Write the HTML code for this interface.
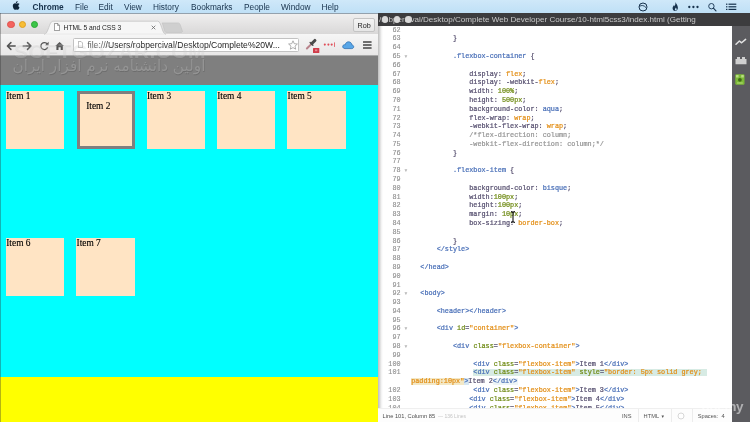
<!DOCTYPE html>
<html lang="en">
<head>
<meta charset="utf-8">
<title>HTML 5 and CSS 3</title>
<style>
html,body{margin:0;padding:0;}
body{width:750px;height:422px;overflow:hidden;position:relative;background:#c3e2f7;font-family:"Liberation Sans",sans-serif;}
div{box-sizing:border-box;}
#stage{position:absolute;left:0;top:0;width:750px;height:422px;overflow:hidden;}
#blur{position:absolute;left:-6px;top:-6px;width:762px;height:434px;filter:blur(0.5px);}
#inner{position:absolute;left:6px;top:6px;width:750px;height:422px;}
#inner>div{position:absolute;}
.bl{position:absolute;}

/* ---------- mac menu bar ---------- */
#menubar{left:0;top:0;width:750px;height:13px;background:linear-gradient(#cfe8f9,#bfe0f6);}
#menubar span{position:absolute;top:2.9px;font-size:8.3px;line-height:9px;color:#16304a;white-space:nowrap;}
#menubar span.b{font-weight:bold;}
#menubar svg{position:absolute;}

/* ---------- chrome window ---------- */
#chrome{left:0;top:13px;width:378px;height:409px;background:#f1f1f1;overflow:hidden;}
#tabstrip{position:absolute;left:0;top:0;width:378px;height:21px;background:linear-gradient(#efefef,#e4e3e3 50%,#d9d8d8);border-top:0.6px solid #93a1ad;}
#toolbar{position:absolute;left:0;top:21px;width:378px;height:21.7px;background:linear-gradient(#f6f6f6,#e8e7e7);border-bottom:0.6px solid #a9a9a9;}
.tl{position:absolute;width:7.2px;height:7.2px;border-radius:50%;top:7.9px;}
#tabtitle{position:absolute;left:63.6px;top:10.8px;font-size:6.7px;line-height:8px;color:#222;white-space:nowrap;}
#rob{position:absolute;left:353px;top:5.2px;width:22.2px;height:14px;border:0.6px solid #c4c4c4;border-radius:2px;background:linear-gradient(#f4f4f4,#e6e6e6);font-size:7.2px;line-height:13.2px;text-align:center;color:#222;}
#urlbar{position:absolute;left:73px;top:24.8px;width:226.4px;height:14px;background:#fff;border:0.6px solid #c2c2c2;border-radius:1.5px;}
#url{position:absolute;left:87.4px;top:27.8px;font-size:8.6px;line-height:9px;color:#1c1c1c;white-space:nowrap;}
#url i{font-style:normal;color:#5a5a5a;}

/* ---------- page ---------- */
#page{position:absolute;left:0;top:42.6px;width:378px;height:366.4px;background:#ffff00;overflow:hidden;font-family:"Liberation Serif",serif;}
#hdr{position:absolute;left:0;top:0;width:378px;height:29.2px;background:#7f7f7f;}
#wm{position:absolute;left:9px;top:-1.2px;width:200px;font-family:"DejaVu Sans","Liberation Sans",sans-serif;font-size:15.3px;line-height:24px;color:#949494;text-shadow:0.5px 0.6px 0.5px #6e6e6e;white-space:nowrap;direction:rtl;text-align:center;}
#flex{position:absolute;left:0;top:29.2px;width:378px;height:292.7px;background:#00ffff;}
.it{position:absolute;width:58.6px;height:58.6px;background:#ffe4c4;font-size:9.4px;line-height:11.8px;padding-left:0.4px;padding-top:0.2px;-webkit-text-stroke:0.12px;color:#000;white-space:nowrap;}
.it.b{border:3px solid #7f7f7f;padding:6.9px 5.8px 5.8px 6.5px;}
#wm2{position:absolute;left:14px;top:27.4px;font-size:21px;line-height:21px;font-weight:bold;letter-spacing:0.4px;color:rgba(255,255,255,0.2);white-space:nowrap;text-shadow:0 0.5px 0.5px rgba(90,90,90,0.1);}

/* ---------- editor ---------- */
#editor{left:378px;top:13px;width:372px;height:409px;background:#fff;overflow:hidden;}
#etitle{position:absolute;left:0;top:0;width:372px;height:13.3px;background:#3c3c3e;}
#etitle span{position:absolute;left:1px;top:2.2px;font-size:8.08px;line-height:9px;color:#c9c9c9;white-space:nowrap;}
.etl{position:absolute;top:3.4px;width:6.6px;height:6.6px;border-radius:50%;background:#d9d9d9;}
#eside{position:absolute;left:353.6px;top:13.3px;width:18.4px;height:396px;background:#5b5b5f;}
#eleft{position:absolute;left:0;top:13.3px;width:5px;height:396px;background:linear-gradient(90deg,#bdbdbd,#f3f3f3 70%,#fff);}
#codewrap{position:absolute;left:-378px;top:-13px;width:750px;height:422px;font-family:"Liberation Mono",monospace;font-size:6.8px;}
#codeclip{position:absolute;left:0;top:13.3px;width:353.6px;height:382.2px;overflow:hidden;}
#codeclip>#codewrap{top:-26.3px;}
.ln{position:absolute;left:380px;width:20.6px;text-align:right;height:9px;line-height:9px;color:#8f8f8f;-webkit-text-stroke:0.12px;}
.fold{position:absolute;left:404.6px;width:6px;height:9px;line-height:9px;color:#b9b9b9;font-size:5.6px;font-family:"DejaVu Sans",sans-serif;}
.cl{position:absolute;height:9px;line-height:9px;white-space:pre;color:#55516a;-webkit-text-stroke:0.22px;}
.hl{position:absolute;background:#d7ebe4;}
.h2{background:#f3e8c6;}
.h3{background:#d6e7f2;}
.h4{background:#eef5f6;}
.p,.x{color:#575070;}
.s,.t{color:#4a70b8;}
.v,.q{color:#e38f17;}
.n,.a{color:#6f8a14;}
.c{color:#969696;}
#status{position:absolute;left:0;top:395.3px;width:353.6px;height:13.7px;background:#fdfdfd;border-top:0.5px solid #efefef;font-size:5.7px;line-height:7px;color:#555;}
#status span{position:absolute;top:3.6px;white-space:nowrap;}
#status i{position:absolute;top:0;width:0.5px;height:13.7px;background:#ececec;}
#udemy{position:absolute;left:323.6px;top:383.9px;font-size:13.4px;line-height:20px;font-weight:bold;color:rgba(255,255,255,0.52);white-space:nowrap;letter-spacing:-0.3px;}
</style>
</head>
<body>
<div id="stage"><div id="blur"><div id="inner">
<!-- edge bleed strips so the soft-focus filter does not fade at the borders -->
<div class="bl" style="left:-6px;top:-6px;width:762px;height:19px;background:#c9e5f8"></div>
<div class="bl" style="left:-6px;top:13px;width:10px;height:21px;background:#e4e3e3"></div>
<div class="bl" style="left:-6px;top:34px;width:10px;height:21.600px;background:#efefef"></div>
<div class="bl" style="left:-6px;top:55.600px;width:10px;height:29.200px;background:#7f7f7f"></div>
<div class="bl" style="left:-6px;top:84.800px;width:10px;height:292.700px;background:#00ffff"></div>
<div class="bl" style="left:-6px;top:377.500px;width:390px;height:51px;background:#ffff00"></div>
<div class="bl" style="left:378px;top:400px;width:360px;height:28px;background:#fdfdfd"></div>
<div class="bl" style="left:731.600px;top:13px;width:25px;height:415px;background:#5b5b5f"></div>
<div class="bl" style="left:740px;top:13px;width:16px;height:13.300px;background:#3c3c3e"></div>

<!-- ======= macOS menu bar ======= -->
<div id="menubar">
  <svg style="left:12px;top:1.4px" width="8" height="9.6" viewBox="0 0 16 19"><path fill="#0f2438" d="M11.2 0c.1 1.1-.3 2.100-.9 2.900-.7.800-1.700 1.400-2.700 1.300-.1-1 .4-2.100 1-2.800C9.300.600 10.400.100 11.200 0zM14.500 6.400c-.1.100-1.800 1.100-1.800 3.200 0 2.500 2.200 3.300 2.200 3.400 0 .100-.3 1.200-1.100 2.300-.7 1-1.400 2-2.500 2-1.100 0-1.400-.6-2.700-.6-1.200 0-1.700.7-2.700.7-1 0-1.800-1-2.600-2.100C2.300 13.900 1.600 11.600 1.600 9.500c0-3.400 2.200-5.200 4.400-5.200 1.100 0 2.100.8 2.800.8.700 0 1.800-.8 3.100-.8.500 0 2.300.100 3.500 1.800l-.9.300z"/></svg>
  <span class="b" style="left:32.4px">Chrome</span>
  <span style="left:75px">File</span>
  <span style="left:98.5px">Edit</span>
  <span style="left:124px">View</span>
  <span style="left:153px">History</span>
  <span style="left:191px">Bookmarks</span>
  <span style="left:244px">People</span>
  <span style="left:281px">Window</span>
  <span style="left:321.5px">Help</span>
  <!-- right status icons -->
  <svg style="left:637.8px;top:1.7px" width="10" height="10" viewBox="0 0 10 10"><circle cx="5" cy="5" r="4" fill="none" stroke="#17324d" stroke-width="1"/><path d="M1.6 4.300C3.400 3 6 3.200 8 5.600" fill="none" stroke="#17324d" stroke-width="0.9"/></svg>
  <svg style="left:672.4px;top:2.2px" width="7" height="9.6" viewBox="0 0 7 9.6"><path fill="#17324d" d="M3.500 0C3.900 1.700 5.900 3.300 5.900 5.800 5.900 7.700 4.800 9 3.200 9 1.600 9 .6 7.800.6 6.300.6 4.900 1.500 4.100 2 3.100 2.400 3.600 2.500 4 2.500 4.400 3.200 3.400 3.600 1.700 3.500 0z"/><path fill="#c3e2f7" d="M3.900 5.600c.4.700.8 1.100.8 1.800 0 .6-.4 1-.9 1-.5 0-.9-.4-.9-.9 0-.7.700-1.100 1-1.900z"/></svg>
  <svg style="left:687px;top:4.6px" width="14" height="4" viewBox="0 0 14 4"><circle cx="2.300" cy="2" r="1.150" fill="#17324d"/><circle cx="6.400" cy="2" r="1.150" fill="#17324d"/><circle cx="10.500" cy="2" r="1.150" fill="#17324d"/></svg>
  <svg style="left:707px;top:1.6px" width="11" height="11" viewBox="0 0 11 11"><circle cx="4.400" cy="4.200" r="2.700" fill="none" stroke="#1d3a56" stroke-width="0.950"/><path d="M6.400 6.200L9 8.900" stroke="#1d3a56" stroke-width="1.150" stroke-linecap="round"/></svg>
  <svg style="left:725.6px;top:2.8px" width="12" height="8" viewBox="0 0 12 8"><g fill="#17324d"><rect x="0" y="0.600" width="1.400" height="1.200"/><rect x="2.500" y="0.600" width="7.800" height="1.200"/><rect x="0" y="3.200" width="1.400" height="1.200"/><rect x="2.500" y="3.200" width="7.800" height="1.200"/><rect x="0" y="5.800" width="1.400" height="1.200"/><rect x="2.500" y="5.800" width="7.800" height="1.200"/></g></svg>
</div>

<!-- ======= Chrome browser window ======= -->
<div id="chrome">
  <div id="tabstrip"></div>
  <div id="toolbar"></div>
  <!-- tab shape + new tab button -->
  <svg style="position:absolute;left:0;top:0" width="378" height="23" viewBox="0 0 378 23">
    <path d="M44.500 21.300C48.300 20.800 49.300 8.200 52.800 8.200L157.800 8.200C161.300 8.200 162 20.800 165.600 21.300Z" fill="#f6f6f6" stroke="#b7b7b7" stroke-width="0.600"/>
    <path d="M45 21.300L165.200 21.300" stroke="#f6f6f6" stroke-width="1"/>
    <path d="M162.200 9.900L177.800 9.900C179.400 9.900 180 10.900 180.400 12.300L182.300 17.800C182.600 18.900 182.200 19.400 181.100 19.400L166.600 19.400C165.500 19.400 165 18.800 164.600 17.600L162.200 9.900Z" fill="#cfcfcf" stroke="#bdbdbd" stroke-width="0.500"/>
  </svg>
  <div class="tl" style="left:7.4px;background:#f4635e;border:0.4px solid #e0514b"></div>
  <div class="tl" style="left:19.2px;background:#f8bd34;border:0.4px solid #dea024"></div>
  <div class="tl" style="left:30.9px;background:#3bc548;border:0.4px solid #2aa834"></div>
  <!-- page favicon in tab -->
  <svg style="position:absolute;left:54.400px;top:10.300px" width="6" height="8" viewBox="0 0 6 8"><path d="M0.400 0.400L3.700 0.400L5.600 2.400L5.600 7.600L0.400 7.600Z" fill="#fff" stroke="#6d6d6d" stroke-width="0.700"/><path d="M3.600 0.400L3.600 2.500L5.600 2.500" fill="none" stroke="#6d6d6d" stroke-width="0.600"/></svg>
  <div id="tabtitle">HTML 5 and CSS 3</div>
  <svg style="position:absolute;left:150.600px;top:12.200px" width="5" height="5" viewBox="0 0 5 5"><path d="M0.700 0.700L4.300 4.300M4.300 0.700L0.700 4.300" stroke="#666" stroke-width="0.800"/></svg>
  <div id="rob">Rob</div>

  <!-- toolbar buttons -->
  <svg style="position:absolute;left:5.500px;top:27.500px" width="62" height="10" viewBox="0 0 62 10">
    <g fill="none" stroke="#525252" stroke-width="1.500" stroke-linecap="round" stroke-linejoin="round">
      <path d="M9.200 5L1.600 5M4.900 1.600L1.400 5L4.900 8.400"/>
    </g>
    <g fill="none" stroke="#5f5f5f" stroke-width="1.500" stroke-linecap="round" stroke-linejoin="round">
      <path d="M17.200 5L24.800 5M21.500 1.600L25 5L21.500 8.400"/>
    </g>
    <path d="M41.300 3.100A3.500 3.500 0 1 0 41.700 6.200" fill="none" stroke="#555" stroke-width="1.300"/>
    <path d="M42.600 0.800L42.600 4.200L39.200 4.200Z" fill="#555"/>
    <path d="M49.200 5.100L53.600 1L58 5.100L56.800 5.100L56.800 9L54.700 9L54.700 6.200L52.500 6.200L52.500 9L50.400 9L50.400 5.100Z" fill="#555"/>
  </svg>
  <div id="urlbar"></div>
  <svg style="position:absolute;left:77.800px;top:28px" width="5" height="7" viewBox="0 0 5 7"><path d="M0.400 0.400L3 0.400L4.600 2L4.600 6.600L0.400 6.600Z" fill="#fff" stroke="#8a8a8a" stroke-width="0.600"/></svg>
  <div id="url"><i>file://</i>/Users/robpercival/Desktop/Complete%20W...</div>
  <!-- star -->
  <svg style="position:absolute;left:287.800px;top:27px" width="10" height="10" viewBox="0 0 10 10"><path d="M5 0.800L6.250 3.700L9.400 4L7 6.100L7.700 9.200L5 7.600L2.300 9.200L3 6.100L0.600 4L3.750 3.700Z" fill="#fff" stroke="#8f8f8f" stroke-width="0.700" stroke-linejoin="round"/></svg>
  <!-- eyedropper extension -->
  <svg style="position:absolute;left:305px;top:25px" width="16" height="16" viewBox="0 0 16 16">
    <path d="M1.900 10.500L6.300 6.100" stroke="#b9838b" stroke-width="2" stroke-linecap="round"/>
    <path d="M5.100 4.500L7.900 7.300" stroke="#454545" stroke-width="1.300" stroke-linecap="round"/>
    <path d="M6.900 5.500L9.900 2.500" stroke="#4a4a4a" stroke-width="3.100" stroke-linecap="round"/>
    <rect x="8" y="9.900" width="6.300" height="5.200" rx="0.500" fill="#d03c4a"/>
    <rect x="10" y="11.500" width="2.300" height="1.700" fill="#e78d95"/>
  </svg>
  <!-- red dots ext -->
  <svg style="position:absolute;left:323px;top:29px" width="14" height="6" viewBox="0 0 14 6"><g fill="#e04c57"><circle cx="1.800" cy="2.600" r="1.050"/><circle cx="5.400" cy="2.600" r="1.050"/><circle cx="8.700" cy="2.600" r="1.050"/><rect x="11.100" y="0.400" width="0.800" height="4.500"/></g></svg>
  <!-- cloud ext -->
  <svg style="position:absolute;left:342px;top:27.500px" width="13" height="9" viewBox="0 0 13 9"><path d="M3 7.600C1.600 7.600.7 6.700.7 5.600.7 4.600 1.400 3.800 2.400 3.700 2.600 3.700 2.900 3.700 3.200 3.900 3.400 2.100 4.800.8 6.500.8 8.400.8 9.800 2.200 9.900 4 11 4.100 11.700 4.800 11.700 5.800 11.700 6.800 10.900 7.600 9.800 7.600Z" fill="#58a6e7" stroke="#2f70b3" stroke-width="0.800" stroke-linejoin="round"/></svg>
  <!-- hamburger -->
  <svg style="position:absolute;left:362.600px;top:28px" width="9" height="8" viewBox="0 0 9 8"><g fill="#444"><rect x="0" y="0.200" width="8.600" height="1.500" rx="0.300"/><rect x="0" y="3.200" width="8.600" height="1.500" rx="0.300"/><rect x="0" y="6.200" width="8.600" height="1.500" rx="0.300"/></g></svg>

  <!-- rendered page -->
  <div id="page">
    <div id="hdr"><div id="wm">اولین دانشنامه نرم افزار ایران</div></div>
    <div id="flex">
      <div class="it" style="left:5.860px;top:5.860px">Item 1</div>
      <div class="it b" style="left:76.700px;top:5.860px;width:58.400px">Item 2</div>
      <div class="it" style="left:146.500px;top:5.860px">Item 3</div>
      <div class="it" style="left:216.800px;top:5.860px">Item 4</div>
      <div class="it" style="left:287.200px;top:5.860px">Item 5</div>
      <div class="it" style="left:5.860px;top:152.900px">Item 6</div>
      <div class="it" style="left:76.200px;top:152.900px">Item 7</div>
    </div>
  </div>
  <div id="wm2">SOFTGOZAR.COM</div>
</div>

<div style="left:-6px;top:13px;width:6.700px;height:415px;background:rgba(50,50,50,0.36)"></div>

<!-- ======= Brackets editor window ======= -->
<div id="editor">
  <div id="codeclip"><div id="codewrap">
<div class="ln" style="top:26px">62</div>
<div class="ln" style="top:34px">63</div>
<div class="cl" style="top:34px;left:404.00px">            <span class="p">}</span></div>
<div class="ln" style="top:43px">64</div>
<div class="ln" style="top:52px">65</div>
<div class="fold" style="top:52px">▾</div>
<div class="cl" style="top:52px;left:404.00px">            <span class="s">.flexbox-container</span><span class="p"> {</span></div>
<div class="ln" style="top:61px">66</div>
<div class="ln" style="top:70px">67</div>
<div class="cl" style="top:70px;left:404.00px">                <span class="p">display</span><span class="p">: </span><span class="v">flex</span><span class="p">;</span></div>
<div class="ln" style="top:78px">68</div>
<div class="cl" style="top:78px;left:404.00px">                <span class="p">display: -webkit-</span><span class="v">flex</span><span class="p">;</span></div>
<div class="ln" style="top:87px">69</div>
<div class="cl" style="top:87px;left:404.00px">                <span class="p">width</span><span class="p">: </span><span class="n">100%</span><span class="p">;</span></div>
<div class="ln" style="top:96px">70</div>
<div class="cl" style="top:96px;left:404.00px">                <span class="p">height</span><span class="p">: </span><span class="n">500px</span><span class="p">;</span></div>
<div class="ln" style="top:105px">71</div>
<div class="cl" style="top:105px;left:404.00px">                <span class="p">background-color</span><span class="p">: </span><span class="s">aqua</span><span class="p">;</span></div>
<div class="ln" style="top:114px">72</div>
<div class="cl" style="top:114px;left:404.00px">                <span class="p">flex-wrap</span><span class="p">: </span><span class="v">wrap</span><span class="p">;</span></div>
<div class="ln" style="top:122px">73</div>
<div class="cl" style="top:122px;left:404.00px">                <span class="p">-webkit-flex-wrap</span><span class="p">: </span><span class="v">wrap</span><span class="p">;</span></div>
<div class="ln" style="top:131px">74</div>
<div class="cl" style="top:131px;left:404.00px">                <span class="c">/*flex-direction: column;</span></div>
<div class="ln" style="top:140px">75</div>
<div class="cl" style="top:140px;left:404.00px">                <span class="c">-webkit-flex-direction: column;*/</span></div>
<div class="ln" style="top:149px">76</div>
<div class="cl" style="top:149px;left:404.00px">            <span class="p">}</span></div>
<div class="ln" style="top:157px">77</div>
<div class="ln" style="top:166px">78</div>
<div class="fold" style="top:166px">▾</div>
<div class="cl" style="top:166px;left:404.00px">            <span class="s">.flexbox-item</span><span class="p"> {</span></div>
<div class="ln" style="top:175px">79</div>
<div class="ln" style="top:184px">80</div>
<div class="cl" style="top:184px;left:404.00px">                <span class="p">background-color</span><span class="p">: </span><span class="s">bisque</span><span class="p">;</span></div>
<div class="ln" style="top:193px">81</div>
<div class="cl" style="top:193px;left:404.00px">                <span class="p">width</span><span class="p">:</span><span class="n">100px</span><span class="p">;</span></div>
<div class="ln" style="top:201px">82</div>
<div class="cl" style="top:201px;left:404.00px">                <span class="p">height</span><span class="p">:</span><span class="n">100px</span><span class="p">;</span></div>
<div class="ln" style="top:210px">83</div>
<div class="cl" style="top:210px;left:404.00px">                <span class="p">margin</span><span class="p">: </span><span class="n">10px</span><span class="p">;</span></div>
<div class="ln" style="top:219px">84</div>
<div class="cl" style="top:219px;left:404.00px">                <span class="p">box-sizing</span><span class="p">: </span><span class="v">border-box</span><span class="p">;</span></div>
<div class="ln" style="top:228px">85</div>
<div class="ln" style="top:237px">86</div>
<div class="cl" style="top:237px;left:404.00px">            <span class="p">}</span></div>
<div class="ln" style="top:245px">87</div>
<div class="cl" style="top:245px;left:404.00px">        <span class="t">&lt;/style&gt;</span></div>
<div class="ln" style="top:254px">88</div>
<div class="ln" style="top:263px">89</div>
<div class="cl" style="top:263px;left:404.00px">    <span class="t">&lt;/head&gt;</span></div>
<div class="ln" style="top:272px">90</div>
<div class="ln" style="top:281px">91</div>
<div class="ln" style="top:289px">92</div>
<div class="fold" style="top:289px">▾</div>
<div class="cl" style="top:289px;left:404.00px">    <span class="t">&lt;body</span><span class="t">&gt;</span></div>
<div class="ln" style="top:298px">93</div>
<div class="ln" style="top:307px">94</div>
<div class="cl" style="top:307px;left:404.00px">        <span class="t">&lt;header</span><span class="t">&gt;</span><span class="t">&lt;/header&gt;</span></div>
<div class="ln" style="top:316px">95</div>
<div class="ln" style="top:324px">96</div>
<div class="fold" style="top:324px">▾</div>
<div class="cl" style="top:324px;left:404.00px">        <span class="t">&lt;div</span> <span class="a">id</span><span class="p">=</span><span class="q">"container"</span><span class="t">&gt;</span></div>
<div class="ln" style="top:333px">97</div>
<div class="ln" style="top:342px">98</div>
<div class="fold" style="top:342px">▾</div>
<div class="cl" style="top:342px;left:404.00px">            <span class="t">&lt;div</span> <span class="a">class</span><span class="p">=</span><span class="q">"flexbox-container"</span><span class="t">&gt;</span></div>
<div class="ln" style="top:351px">99</div>
<div class="ln" style="top:360px">100</div>
<div class="cl" style="top:360px;left:404.00px">                 <span class="t">&lt;div</span> <span class="a">class</span><span class="p">=</span><span class="q">"flexbox-item"</span><span class="t">&gt;</span><span class="x">Item 1</span><span class="t">&lt;/div&gt;</span></div>
<div class="hl" style="left:473.2px;top:368.71px;width:233.8px;height:7.2px"></div>
<div class="hl h2" style="left:410.6px;top:377.50px;width:53.6px;height:7.2px"></div>
<div class="hl h3" style="left:464.2px;top:377.50px;width:4.4px;height:7.2px"></div>
<div class="hl h4" style="left:493px;top:377.50px;width:25px;height:7.2px"></div>
<div class="ln" style="top:368px">101</div>
<div class="cl" style="top:368px;left:404.00px">                 <span class="t">&lt;div</span> <span class="a">class</span><span class="p">=</span><span class="q">"flexbox-item"</span> <span class="a">style</span><span class="p">=</span><span class="q">"border: 5px solid grey;</span></div>
<div class="cl" style="top:377px;left:411.20px"><span class="q">padding:10px"</span><span class="t">&gt;</span><span class="x">Item 2</span><span class="t">&lt;/div&gt;</span></div>
<div class="ln" style="top:386px">102</div>
<div class="cl" style="top:386px;left:404.00px">                 <span class="t">&lt;div</span> <span class="a">class</span><span class="p">=</span><span class="q">"flexbox-item"</span><span class="t">&gt;</span><span class="x">Item 3</span><span class="t">&lt;/div&gt;</span></div>
<div class="ln" style="top:395px">103</div>
<div class="cl" style="top:395px;left:404.00px">                <span class="t">&lt;div</span> <span class="a">class</span><span class="p">=</span><span class="q">"flexbox-item"</span><span class="t">&gt;</span><span class="x">Item 4</span><span class="t">&lt;/div&gt;</span></div>
<div class="ln" style="top:404px">104</div>
<div class="cl" style="top:404px;left:404.00px">                <span class="t">&lt;div</span> <span class="a">class</span><span class="p">=</span><span class="q">"flexbox-item"</span><span class="t">&gt;</span><span class="x">Item 5</span><span class="t">&lt;/div&gt;</span></div>
  </div></div>
  <div id="eleft"></div>
  <div id="etitle">
    <span>/robpercival/Desktop/Complete Web Developer Course/10-html5css3/index.html (Getting</span>
    <div class="etl" style="left:3.700px"></div>
    <div class="etl" style="left:15.700px"></div>
    <div class="etl" style="left:27.100px"></div>
  </div>
  <div id="status">
    <span style="left:4.600px;color:#4c4c4c">Line 101, Column 85</span>
    <span style="left:60px;color:#c4c4c4;font-size:5px">— 136 Lines</span>
    <span style="left:244px">INS</span>
    <i style="left:260px"></i>
    <span style="left:265.600px">HTML</span>
    <span style="left:283.600px;font-size:5px;font-family:'DejaVu Sans',sans-serif;top:3.400px">▾</span>
    <i style="left:293px"></i>
    <svg style="position:absolute;left:299px;top:3px" width="8" height="8" viewBox="0 0 8 8"><circle cx="4" cy="4" r="3" fill="#fff" stroke="#d2d2d2" stroke-width="0.900"/></svg>
    <i style="left:314px"></i>
    <span style="left:319.700px">Spaces:</span>
    <span style="left:343.600px">4</span>
  </div>
  <div id="eside">
    <!-- live preview -->
    <svg style="position:absolute;left:3.600px;top:11.800px" width="12" height="8" viewBox="0 0 12 8"><path d="M1 6.200L4.400 3L6.600 4.800L10.600 1.400" fill="none" stroke="#e2e2e2" stroke-width="1.500" stroke-linejoin="round" stroke-linecap="round"/></svg>
    <!-- extension manager (brick) -->
    <svg style="position:absolute;left:3.600px;top:29.400px" width="12" height="9" viewBox="0 0 12 9"><path d="M0.500 8.300L0.500 3L2 3L2 1L5 1L5 3L7 3L7 1L10 1L10 3L11.500 3L11.500 8.300Z" fill="#cfcfcf"/></svg>
    <!-- extract / green icon -->
    <svg style="position:absolute;left:3.900px;top:47.800px" width="10" height="11" viewBox="0 0 10 11"><rect x="0.300" y="0.300" width="9.200" height="10.400" rx="1.200" fill="#7dbb38"/><rect x="1" y="1" width="2.600" height="2.600" rx="0.600" fill="#b9de82"/><rect x="6.200" y="1" width="2.600" height="2.600" rx="0.600" fill="#b9de82"/><circle cx="4.900" cy="5.800" r="1.900" fill="#3f6b15"/><rect x="2" y="8.300" width="5.800" height="1.400" fill="#a5d366"/></svg>
  </div>
  <!-- I-beam mouse cursor -->
  <svg style="position:absolute;left:132.300px;top:198.300px" width="6" height="12" viewBox="0 0 6 12"><path d="M1 0.600C2.200 0.600 3 1 3 2L3 10C3 11 2.200 11.400 1 11.400M5 0.600C3.800 0.600 3 1 3 2M3 10C3 11 3.800 11.400 5 11.400" fill="none" stroke="#111" stroke-width="1.100"/></svg>
  <div id="udemy">udemy</div>
</div>

</div></div></div>
</body>
</html>
